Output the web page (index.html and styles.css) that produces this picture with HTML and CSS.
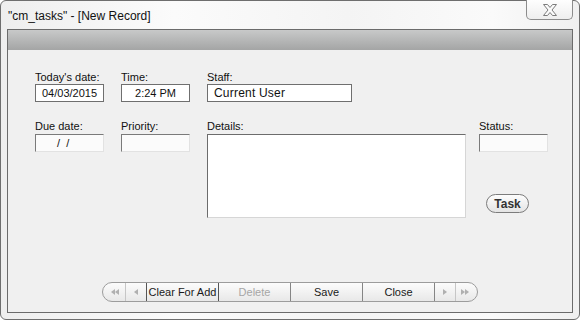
FILE: index.html
```html
<!DOCTYPE html>
<html lang="en">
<head>
  <meta charset="UTF-8" />
  <title>cm_tasks - New Record</title>
  <link rel="stylesheet" href="styles.css">
</head>
<body>

  <div class="window">
    <div class="titlebar">
      <span class="title">"cm_tasks" - [New Record]</span>
      <button class="close-btn">
        <svg width="14" height="12" viewBox="0 0 14 12">
          <polygon points="0.5,0.5 4.5,0.5 7,3.5 9.5,0.5 13.5,0.5 9,6 13.5,11.5 9.5,11.5 7,8.5 4.5,11.5 0.5,11.5 5,6" fill="#fbfbfb" stroke="#7c7c7c" stroke-width="1"/>
        </svg>
      </button>
    </div>

    <div class="client">
      <div class="strip"></div>

      <div class="rows">
        <div class="row">
          <div class="field">
            <label>Today's date:</label>
            <div class="box flat center">04/03/2015</div>
          </div>
          <div class="field">
            <label>Time:</label>
            <div class="box flat center">2:24 PM</div>
          </div>
          <div class="field">
            <label>Staff:</label>
            <div class="box flat wide user">Current User</div>
          </div>
        </div>

        <div class="row second">
          <div class="field">
            <label>Due date:</label>
            <div class="box sunken slashes">/ &nbsp;/</div>
          </div>
          <div class="field">
            <label>Priority:</label>
            <div class="box sunken"></div>
          </div>
          <div class="field details-field">
            <label>Details:</label>
            <div class="box details"></div>
          </div>
          <div class="field">
            <label>Status:</label>
            <div class="box sunken"></div>
            <button class="task-btn">Task</button>
          </div>
        </div>
      </div>

      <div class="nav-wrap">
        <div class="nav">
          <div class="seg cap-left">
            <svg width="8" height="6" viewBox="0 0 8 6"><polygon points="4,0 4,6 0,3" fill="#b0b0b0"/><polygon points="8,0 8,6 4,3" fill="#b0b0b0"/></svg>
          </div>
          <div class="seg arrow">
            <svg width="4" height="6" viewBox="0 0 4 6"><polygon points="4,0 4,6 0,3" fill="#b0b0b0"/></svg>
          </div>
          <div class="seg text focus">Clear For Add</div>
          <div class="seg text disabled">Delete</div>
          <div class="seg text dark">Save</div>
          <div class="seg text dark">Close</div>
          <div class="seg arrow dark">
            <svg width="4" height="6" viewBox="0 0 4 6"><polygon points="0,0 0,6 4,3" fill="#b0b0b0"/></svg>
          </div>
          <div class="seg cap-right">
            <svg width="8" height="6" viewBox="0 0 8 6"><polygon points="0,0 0,6 4,3" fill="#b0b0b0"/><polygon points="4,0 4,6 8,3" fill="#b0b0b0"/></svg>
          </div>
        </div>
      </div>
    </div>
  </div>

</body>
</html>
```

FILE: styles.css
```css
body {
  margin: 0;
  font-family: "Liberation Sans", Arial, sans-serif;
  background: #fff;
}
.window {
  width: 580px;
  height: 320px;
  box-sizing: border-box;
  border: 1px solid #6e6e6e;
  border-radius: 6px;
  padding: 0 6px 6px 6px;
  display: flex;
  flex-direction: column;
  background: linear-gradient(to right, #eeeeee, #fbfbfb 30%, #f4f4f4 60%, #fafafa 85%, #f0f0f0);
}
.titlebar {
  height: 28px;
  display: flex;
  justify-content: space-between;
  align-items: flex-start;
}
.title {
  font-size: 12px;
  color: #111;
  padding: 8px 0 0 1px;
}
.close-btn {
  margin-top: -1px;
  width: 47px;
  height: 20px;
  padding: 0 0 0 1px;
  border: 1px solid #8c8c8c;
  border-top: none;
  border-radius: 0 0 5px 5px;
  background: linear-gradient(#fefefe, #eeeeee);
  display: flex;
  align-items: center;
  justify-content: center;
}
.client {
  flex: 1;
  border: 1px solid #6b6b6b;
  background: #f0f0f0;
  display: flex;
  flex-direction: column;
}
.strip {
  height: 20px;
  background: linear-gradient(#c8c9c9, #a4a5a5);
}
.rows {
  padding: 21px 0 0 27px;
}
.row {
  display: flex;
  align-items: flex-start;
}
.row.second {
  margin-top: 18px;
}
.field {
  display: flex;
  flex-direction: column;
  margin-right: 17px;
}
.field.details-field {
  margin-right: 13px;
}
label {
  font-size: 11px;
  line-height: 13px;
  height: 13px;
  color: #111;
}
.row.second label {
  height: 14px;
}
.box {
  box-sizing: border-box;
  width: 69px;
  height: 18px;
  background: #fff;
  font-size: 11px;
  line-height: 16px;
  color: #111;
}
.box.flat {
  border: 1px solid #6f6f6f;
}
.box.center {
  text-align: center;
}
.box.wide {
  width: 145px;
}
.box.user {
  font-size: 12px;
  padding-left: 6px;
  letter-spacing: 0.2px;
}
.box.sunken {
  border: 1px solid;
  border-color: #7a7a7a #e2e2e2 #e2e2e2 #7a7a7a;
  background: #fbfbfb;
}
.box.slashes {
  padding-left: 21px;
}
.box.details {
  width: 259px;
  height: 84px;
  border: 1px solid;
  border-color: #6c6c6c #d6d6d6 #d6d6d6 #6c6c6c;
}
.task-btn {
  margin: 42px 0 0 7px;
  width: 43px;
  height: 19px;
  padding: 0;
  border: 1px solid #7c7c7c;
  border-radius: 10px;
  background: linear-gradient(#fdfdfd, #e4e4e4);
  font-family: "Liberation Sans", Arial, sans-serif;
  font-size: 12px;
  font-weight: bold;
  color: #333;
}
.nav-wrap {
  margin-top: auto;
  padding-bottom: 10px;
  display: flex;
  justify-content: center;
}
.nav {
  display: flex;
  height: 20px;
  box-sizing: border-box;
  border: 1px solid #9c9c9c;
  border-radius: 10px;
  overflow: hidden;
  background: linear-gradient(#fcfcfc, #e8e8e8);
}
.seg {
  box-sizing: border-box;
  display: flex;
  align-items: center;
  justify-content: center;
  border-left: 1px solid #c6c6c6;
}
.seg.cap-left {
  width: 22px;
  border-left: none;
  padding-left: 2px;
}
.seg.cap-right {
  width: 22px;
  padding-right: 3px;
}
.seg.arrow {
  width: 21px;
}
.seg.text {
  width: 72px;
  font-size: 11px;
  color: #1a1a1a;
}
.seg.focus {
  border: 1px solid #555;
  margin: -1px 0;
  height: 20px;
  border-right: none;
}
.seg.disabled {
  color: #a6a6a6;
  border-left: 1px solid #555;
}
.seg.dark {
  border-left: 1px solid #858585;
}
```
